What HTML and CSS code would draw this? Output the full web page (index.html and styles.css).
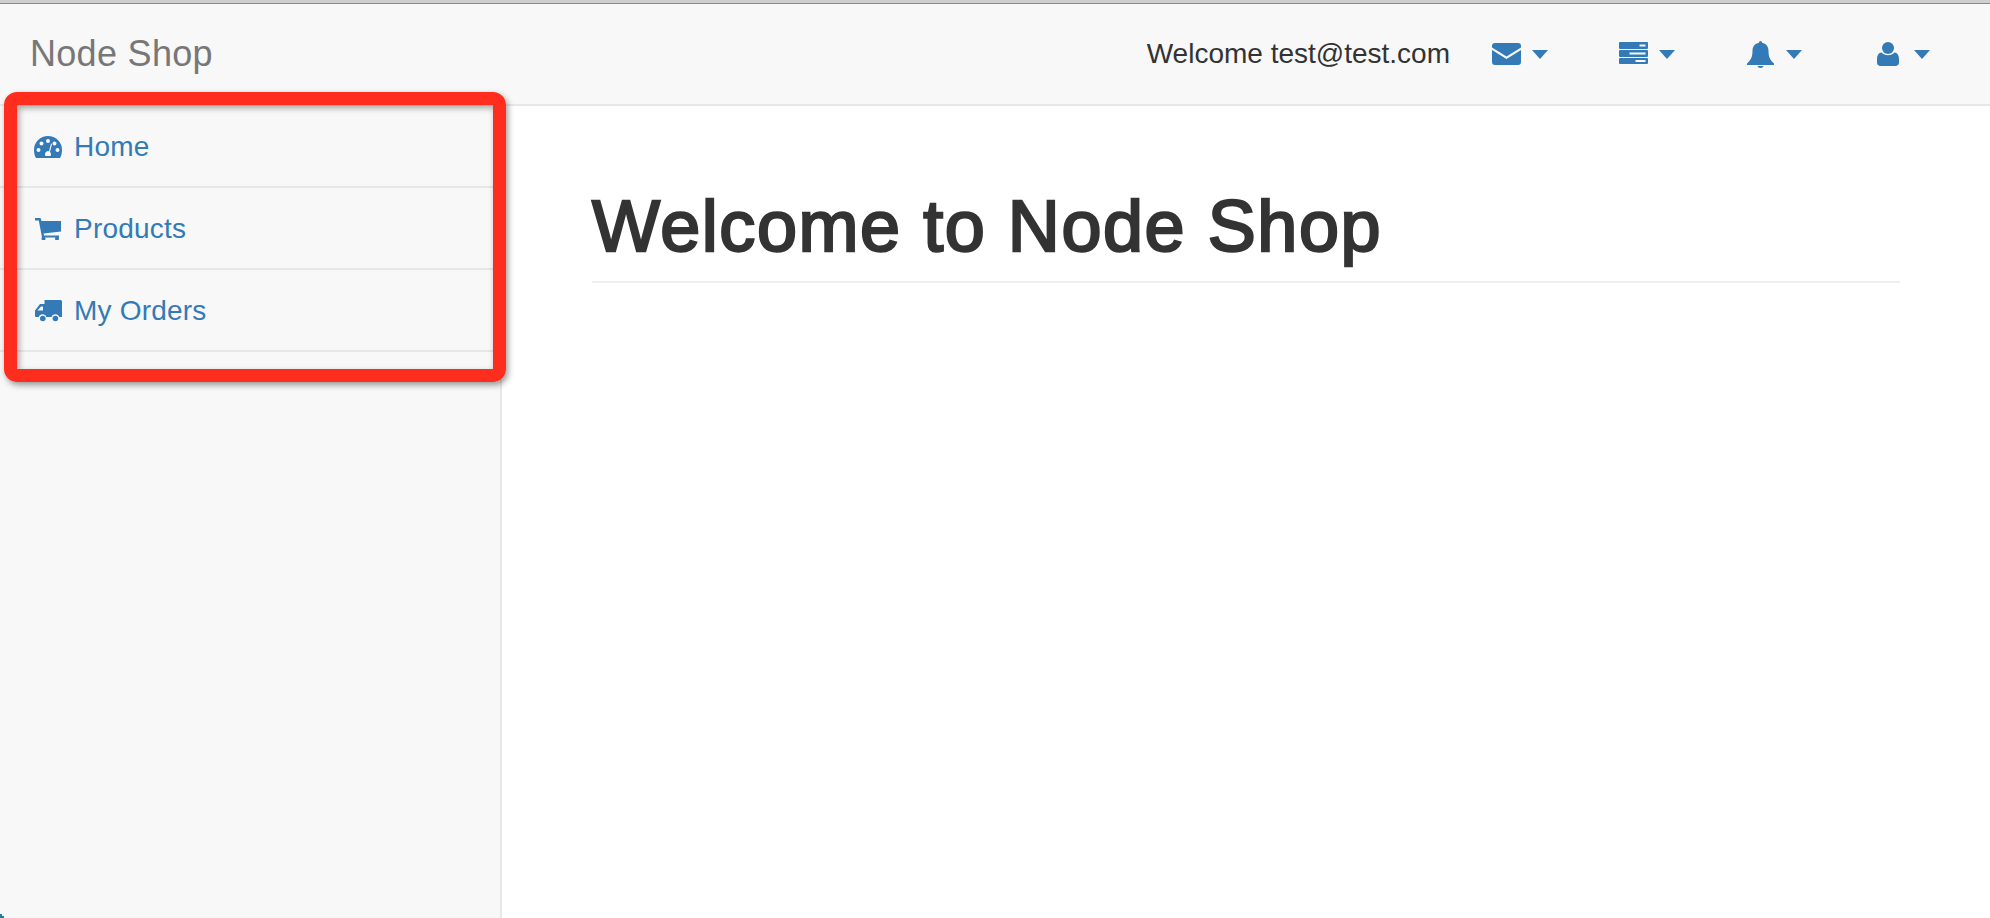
FILE: index.html
```html
<!DOCTYPE html>
<html lang="en">
<head>
<meta charset="utf-8">
<title>Node Shop</title>
<link rel="stylesheet" href="styles.css">
</head>
<body>
<div class="chrome"></div>
<nav class="topbar">
  <a class="brand">Node Shop</a>
  <div class="top-right">
    <span class="welcome">Welcome test@test.com</span>
    <ul class="top-menu">
      <li class="top-item">
        <svg class="ico-mail" viewBox="0 0 29 22"><path d="M3 0h23a3 3 0 0 1 3 3v1.500L14.500 13.500 0 4.500V3a3 3 0 0 1 3-3z"/><path d="M0 7l14.500 9L29 7v12a3 3 0 0 1-3 3H3a3 3 0 0 1-3-3z"/></svg>
        <span class="caret"></span>
      </li>
      <li class="top-item">
        <svg class="ico-server" viewBox="0 0 29 22"><path fill-rule="evenodd" d="M1 0h27a1 1 0 0 1 1 1v5a1 1 0 0 1-1 1H1a1 1 0 0 1-1-1V1a1 1 0 0 1 1-1zm19.500 2.500v2h6v-2zM1 8h27a1 1 0 0 1 1 1v5a1 1 0 0 1-1 1H1a1 1 0 0 1-1-1V9a1 1 0 0 1 1-1zm9.500 2.500v2h16v-2zM1 16h27a1 1 0 0 1 1 1v4a1 1 0 0 1-1 1H1a1 1 0 0 1-1-1v-4a1 1 0 0 1 1-1zm15.500 2v2h10v-2z"/></svg>
        <span class="caret"></span>
      </li>
      <li class="top-item top-item-bell">
        <svg class="ico-bell" viewBox="0 0 27 27"><path d="M13.500 0c1 0 1.600.7 1.500 1.800 4.200.7 6.500 4 6.500 8.200 0 6 1.700 9 5.500 12.500v1.500H0v-1.500C3.800 19 5.500 16 5.500 10c0-4.200 2.300-7.500 6.500-8.200-.1-1.100.5-1.800 1.500-1.800z"/><path d="M10.500 25h6c-.3 1.300-1.500 2-3 2s-2.700-.7-3-2z"/></svg>
        <span class="caret"></span>
      </li>
      <li class="top-item top-item-user">
        <svg class="ico-user" viewBox="0 0 22 24"><circle cx="11" cy="6" r="6"/><path d="M4.500 10.500c1.700 1.700 3.900 2.700 6.500 2.700s4.800-1 6.500-2.700c2.900.3 4.500 2.600 4.500 6.500v3.500c0 2-1.400 3.500-3.500 3.500h-15C1.400 24 0 22.500 0 20.500V17c0-3.900 1.600-6.200 4.500-6.500z"/></svg>
        <span class="caret"></span>
      </li>
    </ul>
  </div>
</nav>
<div class="layout">
  <aside class="sidebar">
    <ul class="side-menu">
      <li class="side-item">
        <a class="side-link">
          <svg class="side-ico" viewBox="0 0 28 22"><path fill-rule="evenodd" d="M14 0a14 14 0 0 1 14 14c0 2.800-.6 5.600-2 8H2c-1.400-2.400-2-5.200-2-8A14 14 0 0 1 14 0zm0 3a2 2 0 1 0 0 4 2 2 0 0 0 0-4zM7.500 5.500a2 2 0 1 0 0 4 2 2 0 0 0 0-4zm13 0a2 2 0 1 0 0 4 2 2 0 0 0 0-4zM4.500 12a2 2 0 1 0 0 4 2 2 0 0 0 0-4zm19 0a2 2 0 1 0 0 4 2 2 0 0 0 0-4zM17 7.500l-2 7.700a3.200 3.200 0 0 0-4 3.100c0 .7.200 1.200.5 1.700h5c.3-.5.500-1 .5-1.700 0-1-.4-1.800-1-2.400l2-8z"/></svg>
          <span>Home</span>
        </a>
      </li>
      <li class="side-item">
        <a class="side-link">
          <svg class="side-ico" viewBox="0 0 28 22"><path d="M1 0h5.500l1 3H27v10.500L9.500 15.500l.5 2h15v2H8L4.800 2.500H1z"/><circle cx="9.500" cy="20.500" r="2"/><circle cx="23" cy="20.500" r="2"/></svg>
          <span>Products</span>
        </a>
      </li>
      <li class="side-item">
        <a class="side-link">
          <svg class="side-ico" viewBox="0 0 28 22"><path fill-rule="evenodd" d="M10.500 0h16A1.500 1.500 0 0 1 28 1.500V17h-2.800a4 4 0 0 0-7.600 0h-5.200a4 4 0 0 0-7.600 0H2a1 1 0 0 1-1-1v-5.500L6 4h4.500zM9 6.500H7L3.500 10.500H9z"/><circle cx="8.800" cy="18.500" r="2.800"/><circle cx="21.400" cy="18.500" r="2.800"/></svg>
          <span>My Orders</span>
        </a>
      </li>
    </ul>
  </aside>
  <main class="content">
    <h1 class="title">Welcome to Node Shop</h1>
  </main>
</div>
<div class="highlight"></div>
<div class="corner"></div>
</body>
</html>
```

FILE: styles.css
```css
* { box-sizing: border-box; }
html, body { margin: 0; height: 100%; }
body {
  position: relative;
  height: 918px;
  overflow: hidden;
  display: flex;
  flex-direction: column;
  background: #fff;
  color: #333;
  font-family: "Liberation Sans", Arial, sans-serif;
  font-size: 28px;
}
.chrome {
  height: 4px;
  flex: none;
  background: #cfcfcf;
  border-bottom: 1px solid #8a8a8a;
}
.topbar {
  flex: none;
  height: 102px;
  display: flex;
  align-items: center;
  justify-content: space-between;
  padding: 0 60px 0 30px;
  background: #f8f8f8;
  border-bottom: 2px solid #e7e7e7;
}
.brand { font-size: 36px; letter-spacing: .3px; color: #777; }
.top-right { display: flex; align-items: center; gap: 42px; }
.welcome { color: #333; }
.top-menu {
  list-style: none;
  margin: 0;
  padding: 0;
  display: flex;
  align-items: center;
  gap: 71px;
}
.top-item {
  display: flex;
  align-items: center;
  gap: 11px;
  color: #337ab7;
}
.top-item-bell { gap: 12px; margin-left: 1px; }
.top-item-user { gap: 15px; margin-left: 4px; }
.top-item svg { display: block; fill: currentColor; }
.ico-mail { width: 29px; height: 22px; }
.ico-server { width: 29px; height: 22px; margin-top: -2px; }
.ico-bell { width: 27px; height: 27px; }
.ico-user { width: 22px; height: 24px; }
.caret {
  width: 0;
  height: 0;
  border-top: 9px solid #337ab7;
  border-left: 8px solid transparent;
  border-right: 8px solid transparent;
}
.layout { flex: 1; display: flex; min-height: 0; }
.sidebar {
  flex: none;
  width: 502px;
  background: #f8f8f8;
  border-right: 2px solid #e7e7e7;
}
.side-menu { list-style: none; margin: 0; padding: 0; }
.side-item { height: 82px; border-bottom: 2px solid #e7e7e7; }
.side-link {
  height: 80px;
  display: flex;
  align-items: center;
  gap: 12px;
  padding: 2px 0 0 34px;
  letter-spacing: .2px;
  color: #337ab7;
}
.side-ico { width: 28px; height: 22px; fill: currentColor; display: block; }
.content { flex: 1; padding: 0 90px 0 90px; }
.title {
  margin: 81px 0 0;
  padding-bottom: 15px;
  font-size: 72px;
  line-height: 79px;
  font-weight: 400;
  letter-spacing: 1.55px;
  -webkit-text-stroke: 2.4px #333;
  color: #333;
  border-bottom: 2px solid #eee;
}
.highlight {
  position: absolute;
  left: 4px;
  top: 92px;
  width: 502px;
  height: 290px;
  border: 13px solid #ff2d1e;
  border-radius: 13px;
  box-shadow: 2px 3px 6px rgba(0, 0, 0, .4), inset 2px 3px 6px rgba(0, 0, 0, .35);
}
.corner {
  position: absolute;
  left: 0;
  bottom: 0;
  width: 4px;
  height: 4px;
  background: #1c7f9c;
  clip-path: polygon(0 0, 50% 0, 50% 50%, 100% 50%, 100% 100%, 0 100%);
}
```
